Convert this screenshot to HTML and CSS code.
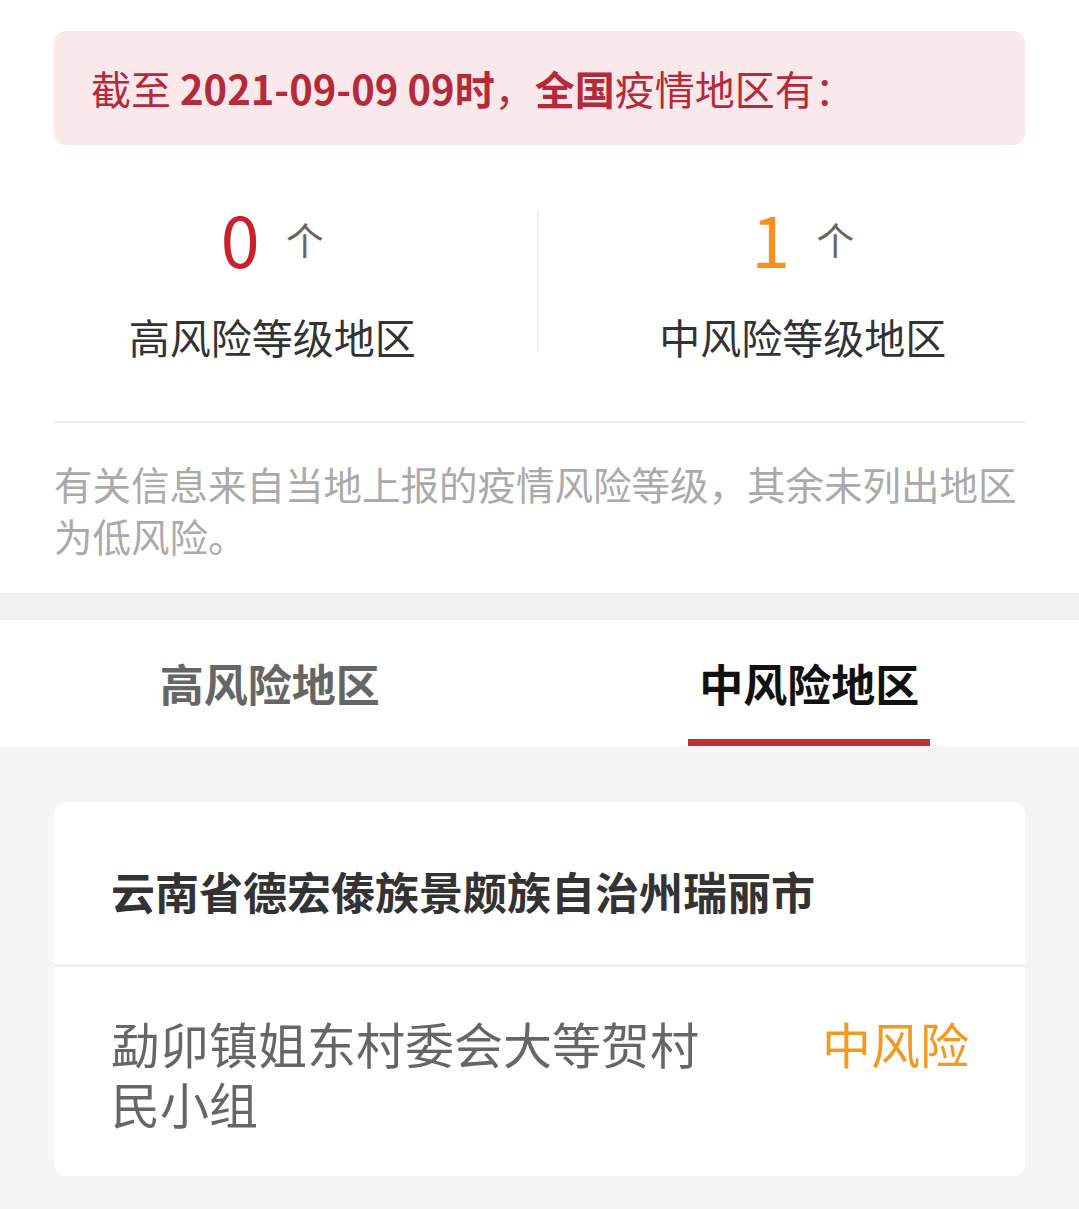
FILE: index.html
```html
<!DOCTYPE html>
<html lang="zh-CN">
<head>
    <meta charset="UTF-8">
    <meta name="viewport" content="width=device-width, initial-scale=1.0">
    <title>疫情风险等级查询</title>
    <link rel="stylesheet" href="styles.css">
</head>
<body>

    <div class="summary">
        <div class="banner">截至 <strong>2021-09-09 09时</strong>，<strong>全国</strong>疫情地区有：</div>

        <div class="stats">
            <div class="stat stat-left">
                <div class="stat-num"><span class="num high">0</span><span class="unit">个</span></div>
                <div class="stat-label">高风险等级地区</div>
            </div>
            <div class="stats-divider"></div>
            <div class="stat stat-right">
                <div class="stat-num"><span class="num mid">1</span><span class="unit">个</span></div>
                <div class="stat-label">中风险等级地区</div>
            </div>
        </div>

        <div class="line"></div>

        <p class="note">有关信息来自当地上报的疫情风险等级，其余未列出地区为低风险。</p>
    </div>

    <div class="band"></div>

    <!-- Tabs -->
    <div class="tabs">
        <div class="tab"><span class="tab-label">高风险地区</span></div>
        <div class="tab active"><span class="tab-label">中风险地区</span></div>
    </div>

    <div class="list">
        <div class="card">
            <div class="card-head">云南省德宏傣族景颇族自治州瑞丽市</div>
            <div class="card-row">
                <div class="place">勐卯镇姐东村委会大等贺村民小组</div>
                <div class="level">中风险</div>
            </div>
        </div>
    </div>

</body>
</html>
```

FILE: styles.css
```css
body {
    margin: 0;
    font-family: "Noto Sans CJK SC", "Noto Sans", sans-serif;
    background: #f5f5f5;
    color: #333;
}
.summary {
    background: white;
    padding-top: 31px;
}
.banner {
    margin: 0 54px;
    height: 114px;
    padding-left: 37px;
    background: #fae8ea;
    border-radius: 12px;
    color: #b52a3a;
    font-size: 40px;
    line-height: 114px;
    white-space: nowrap;
}
.banner strong {
    font-weight: bold;
}
.stats {
    display: flex;
    padding-top: 57px;
}
.stat {
    flex: 1;
    text-align: center;
}
.stat-left {
    padding-left: 8px;
}
.stat-right {
    padding-right: 12px;
}
.stats-divider {
    width: 2px;
    height: 141px;
    align-self: center;
    background: #eeeeee;
}
.stat-num {
    display: flex;
    justify-content: center;
    align-items: center;
    height: 72px;
}
.num {
    font-size: 70px;
    line-height: 72px;
}
.num.high {
    color: #c9222f;
}
.num.mid {
    color: #f5911e;
}
.unit {
    margin-left: 26px;
    font-size: 38px;
    color: #666;
}
.stat-label {
    margin-top: 38px;
    font-size: 41px;
    line-height: 48px;
    color: #333;
}
.line {
    margin: 61px 54px 0;
    height: 2px;
    background: #eeeeee;
}
.note {
    margin: 0 54px;
    padding: 34px 0 32px;
    font-size: 38.5px;
    line-height: 52px;
    color: #aaaaaa;
}
.band {
    height: 27px;
    background: #f1f1f1;
}
.tabs {
    display: flex;
    background: white;
    height: 126px;
}
.tab {
    flex: 1;
    display: flex;
    justify-content: center;
}
.tab-label {
    box-sizing: border-box;
    height: 126px;
    padding: 33px 11px 0;
    font-size: 44px;
    line-height: 60px;
    font-weight: bold;
    color: #666;
    border-bottom: 7px solid transparent;
}
.tab.active .tab-label {
    color: #111;
    border-bottom-color: #c0303c;
}
.list {
    padding: 56px 54px 34px;
}
.card {
    background: white;
    border-radius: 12px;
}
.card-head {
    height: 165px;
    box-sizing: border-box;
    padding: 59px 57px 0;
    font-size: 44px;
    line-height: 60px;
    font-weight: bold;
    color: #333;
    border-bottom: 3px solid #eeeeee;
}
.card-row {
    display: flex;
    gap: 80px;
    padding: 46px 56px 43px 57px;
    font-size: 49px;
    line-height: 60px;
}
.place {
    flex: 1;
    color: #666;
}
.level {
    color: #f39a1e;
}
```
